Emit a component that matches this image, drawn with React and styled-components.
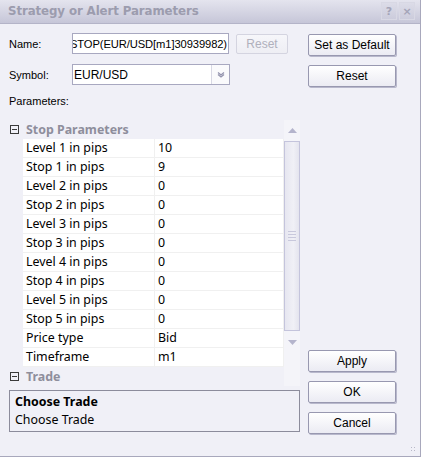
import React from "react";
import styled, { createGlobalStyle } from "styled-components";

const Global = createGlobalStyle`
  html, body { margin: 0; padding: 0; background: #ffffff; }
  body { font-family: "Liberation Sans", Arial, sans-serif; }
  * { box-sizing: border-box; }
`;

const Window = styled.div`
  width: 421px;
  height: 457px;
  display: flex;
  flex-direction: column;
  background: #f0f0f7;
  border-right: 1px solid #a8a8bc;
  border-bottom: 1px solid #a8a8bc;
  position: relative;
`;

const TitleBar = styled.div`
  height: 24px;
  flex: none;
  display: flex;
  align-items: center;
  padding: 0 5px 1px 8px;
  background: linear-gradient(#e4e4ee, #c6c6d8);
  border-bottom: 1px solid #b4b4c8;
`;

const Title = styled.div`
  flex: 1;
  font-family: "DejaVu Sans", Verdana, sans-serif;
  font-weight: bold;
  font-size: 11.8px;
  color: #9c9cae;
  letter-spacing: -0.1px;
`;

const CaptionButton = styled.div`
  width: 16px;
  height: 18px;
  margin-left: 2px;
  display: flex;
  align-items: center;
  justify-content: center;
  border: 1px solid #d8d8e4;
  background: linear-gradient(#dcdce8, #ccccdc);
  color: #a4a4b8;
  font-family: "DejaVu Sans", Verdana, sans-serif;
  font-weight: bold;
  font-size: 11px;
`;

const Body = styled.div`
  flex: 1;
  display: flex;
  padding: 9px 0 22px 9px;
`;

const LeftCol = styled.div`
  width: 291px;
  display: flex;
  flex-direction: column;
`;

const RightCol = styled.div`
  width: 88px;
  margin-left: 8px;
  display: flex;
  flex-direction: column;
  gap: 9px;
  padding-top: 1px;
`;

const BottomGroup = styled.div`
  margin-top: auto;
  display: flex;
  flex-direction: column;
  gap: 9px;
`;

const FieldRow = styled.div`
  display: flex;
  align-items: center;
  height: 21px;
  margin-bottom: ${(p) => p.$mb || 0}px;
`;

const Label = styled.div`
  width: 63px;
  font-size: 11px;
  color: #000;
`;

const TextInput = styled.div`
  width: 157px;
  height: 21px;
  border: 1px solid #a8a8c0;
  background: #fff;
  overflow: hidden;
  display: flex;
  justify-content: flex-end;
  align-items: center;
  padding-right: 1px;
  font-size: 11.2px;
  letter-spacing: -0.1px;
  white-space: nowrap;
`;

const Button = styled.div`
  width: ${(p) => p.$w || 88}px;
  height: ${(p) => p.$h || 22}px;
  margin-left: ${(p) => p.$ml || 0}px;
  display: flex;
  align-items: center;
  justify-content: center;
  border: 1px solid ${(p) => (p.$disabled ? "#d4d4e0" : "#9898b0")};
  border-radius: 2px;
  background: ${(p) =>
    p.$disabled
      ? "linear-gradient(#f6f6fa, #eeeef4)"
      : "linear-gradient(#ffffff, #ebebf3)"};
  box-shadow: ${(p) => (p.$disabled ? "none" : "1px 1px 0 #b8b8cc")};
  color: ${(p) => (p.$disabled ? "#b0b0bc" : "#000")};
  font-size: 12px;
`;

const Combo = styled.div`
  width: 158px;
  height: 21px;
  border: 1px solid #a8a8c0;
  background: #fff;
  display: flex;
  align-items: center;
  font-size: 12px;
`;

const ComboText = styled.div`
  flex: 1;
  padding-left: 1px;
`;

const ComboArrow = styled.div`
  width: 18px;
  height: 100%;
  border-left: 1px solid #d8d8e4;
  display: flex;
  align-items: center;
  justify-content: center;
  background: #fafafc;
`;

const SectionLabel = styled.div`
  font-size: 11px;
  height: 14px;
  margin: 10px 0 11px 0;
`;

const Grid = styled.div`
  margin-left: -1px;
  height: 266px;
  display: flex;
  font-family: "Noto Sans", "Open Sans", sans-serif;
  font-size: 12.4px;
`;

const GridBody = styled.div`
  width: 276px;
  display: flex;
  flex-direction: column;
  overflow: hidden;
`;

const CategoryRow = styled.div`
  height: 19px;
  flex: none;
  display: flex;
  align-items: center;
  padding-left: 2px;
  font-weight: bold;
  color: #8e8e9c;
`;

const MinusBox = styled.div`
  width: 9px;
  height: 9px;
  border: 1px solid #3a3a3a;
  margin-right: 7px;
  position: relative;
  &::after {
    content: "";
    position: absolute;
    left: 1px;
    right: 1px;
    top: 3px;
    height: 1px;
    background: #3a3a3a;
  }
`;

const PropRow = styled.div`
  height: 19px;
  flex: none;
  display: grid;
  grid-template-columns: 131px 128px;
  margin-left: 15px;
  gap: 1px;
  border-bottom: 1px solid #f0f0f0;
  background: #f0f0f0;
`;

const Cell = styled.div`
  background: #fff;
  display: flex;
  align-items: center;
  padding-left: 3px;
  line-height: 18px;
  white-space: nowrap;
  color: #000;
`;

const ScrollBar = styled.div`
  width: 16px;
  display: flex;
  flex-direction: column;
  background: #f4f4f9;
`;

const ScrollArrow = styled.div`
  height: 20px;
  flex: none;
  display: flex;
  align-items: center;
  justify-content: center;
  margin-top: ${(p) => p.$mt || 0}px;
`;

const Thumb = styled.div`
  height: 190px;
  margin: 1px 0;
  border: 1px solid #c4c4dc;
  background: linear-gradient(90deg, #e6e6f0, #f0f0f6 60%, #e4e4ee);
  display: flex;
  flex-direction: column;
  align-items: center;
  justify-content: center;
  gap: 2px;
`;

const Grip = styled.div`
  width: 8px;
  height: 1px;
  background: #c8c8dc;
`;

const DescBox = styled.div`
  margin-top: 4px;
  height: 42px;
  border: 1px solid #8c8c9c;
  padding: 2px 0 0 5px;
  font-family: "Noto Sans", "Open Sans", sans-serif;
  font-size: 12.4px;
  line-height: 18px;
`;

const DescTitle = styled.div`
  font-weight: bold;
`;

const ResizeGrip = styled.div`
  position: absolute;
  right: 3px;
  bottom: 3px;
  width: 7px;
  height: 7px;
  background-image: radial-gradient(#b8b8c8 0.9px, transparent 1px);
  background-size: 3px 3px;
`;

const rows = [
  ["Level 1 in pips", "10"],
  ["Stop 1 in pips", "9"],
  ["Level 2 in pips", "0"],
  ["Stop 2 in pips", "0"],
  ["Level 3 in pips", "0"],
  ["Stop 3 in pips", "0"],
  ["Level 4 in pips", "0"],
  ["Stop 4 in pips", "0"],
  ["Level 5 in pips", "0"],
  ["Stop 5 in pips", "0"],
  ["Price type", "Bid"],
  ["Timeframe", "m1"],
];

const Tri = ({ up }) => (
  <svg width="9" height="5" viewBox="0 0 9 5">
    <path d={up ? "M0 5 L4.5 0 L9 5 Z" : "M0 0 L4.5 5 L9 0 Z"} fill="#b4b4cc" />
  </svg>
);

export default function App() {
  return (
    <>
      <Global />
      <Window>
        <TitleBar>
          <Title>Strategy or Alert Parameters</Title>
          <CaptionButton>?</CaptionButton>
          <CaptionButton>×</CaptionButton>
        </TitleBar>
        <Body>
          <LeftCol>
            <FieldRow $mb={10}>
              <Label>Name:</Label>
              <TextInput>STOP(EUR/USD[m1]30939982)</TextInput>
              <Button $w={52} $h={20} $ml={7} $disabled>
                Reset
              </Button>
            </FieldRow>
            <FieldRow>
              <Label>Symbol:</Label>
              <Combo>
                <ComboText>EUR/USD</ComboText>
                <ComboArrow>
                  <svg width="8" height="6" viewBox="0 0 8 6">
                    <path d="M1 0.5 L4 3 L7 0.5 M1 2.5 L4 5 L7 2.5" stroke="#9494ae" strokeWidth="1.3" fill="none" />
                  </svg>
                </ComboArrow>
              </Combo>
            </FieldRow>
            <SectionLabel>Parameters:</SectionLabel>
            <Grid>
              <GridBody>
                <CategoryRow>
                  <MinusBox />
                  Stop Parameters
                </CategoryRow>
                {rows.map(([k, v]) => (
                  <PropRow key={k}>
                    <Cell>{k}</Cell>
                    <Cell>{v}</Cell>
                  </PropRow>
                ))}
                <CategoryRow>
                  <MinusBox />
                  Trade
                </CategoryRow>
              </GridBody>
              <ScrollBar>
                <ScrollArrow>
                  <Tri up />
                </ScrollArrow>
                <Thumb>
                  <Grip />
                  <Grip />
                  <Grip />
                  <Grip />
                </Thumb>
                <ScrollArrow $mt={"auto"}>
                  <Tri />
                </ScrollArrow>
              </ScrollBar>
            </Grid>
            <DescBox>
              <DescTitle>Choose Trade</DescTitle>
              <div>Choose Trade</div>
            </DescBox>
          </LeftCol>
          <RightCol>
            <Button>Set as Default</Button>
            <Button>Reset</Button>
            <BottomGroup>
              <Button>Apply</Button>
              <Button>OK</Button>
              <Button>Cancel</Button>
            </BottomGroup>
          </RightCol>
        </Body>
        <ResizeGrip />
      </Window>
    </>
  );
}
